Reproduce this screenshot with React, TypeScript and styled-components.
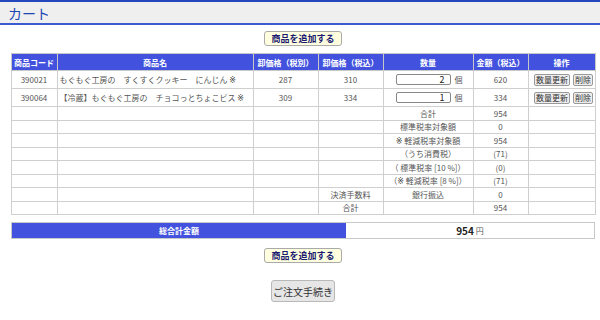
import React from "react";
import styled, { createGlobalStyle } from "styled-components";

const GlobalStyle = createGlobalStyle`
    body {
        margin: 0;
        background: #fff;
        font-family: "Noto Sans CJK JP", "Noto Sans", sans-serif;
        color: #555;
    }
`

interface CartItem {
    code: string;
    name: string;
    price: number;
    priceTax: number;
    qty: number;
    amount: number;
}

const items: CartItem[] = [
    { code: "390021", name: "もぐもぐ工房の　すくすくクッキー　にんじん", price: 287, priceTax: 310, qty: 2, amount: 620 },
    { code: "390064", name: "【冷蔵】もぐもぐ工房の　チョコっとちょこビス", price: 309, priceTax: 334, qty: 1, amount: 334 },
]

// ※ drawn in DejaVu so it never falls to a colour glyph
const Mark = styled.span`
    font-family: "DejaVu Sans", sans-serif;
    color: #444;
    font-size: 8px;
`

const summary: { left: string; label: React.ReactNode; value: string }[] = [
    { left: "", label: "合計", value: "954" },
    { left: "", label: "標準税率対象額", value: "0" },
    { left: "", label: <><Mark>※</Mark> 軽減税率対象額</>, value: "954" },
    { left: "", label: "（うち消費税）", value: "(71)" },
    { left: "", label: "（ 標準税率 [10 %]）", value: "(0)" },
    { left: "", label: <>（<Mark>※</Mark> 軽減税率 [8 %]）</>, value: "(71)" },
    { left: "決済手数料", label: "銀行振込", value: "0" },
    { left: "合計", label: "", value: "954" },
]

const App = () => {
    return (
        <>
            <GlobalStyle />
            <Header>
                <Title>カート</Title>
            </Header>
            <Main>
                <AddButton>商品を追加する</AddButton>
                <CartTable>
                    <colgroup>
                        <col style={{ width: 46 }} />
                        <col style={{ width: 196 }} />
                        <col style={{ width: 65 }} />
                        <col style={{ width: 65 }} />
                        <col style={{ width: 90 }} />
                        <col style={{ width: 55 }} />
                        <col style={{ width: 67 }} />
                    </colgroup>
                    <thead>
                        <tr>
                            <Th>商品コード</Th>
                            <Th>商品名</Th>
                            <Th>卸価格（税別）</Th>
                            <Th>卸価格（税込）</Th>
                            <Th>数量</Th>
                            <Th>金額（税込）</Th>
                            <Th>操作</Th>
                        </tr>
                    </thead>
                    <tbody>
                        {items.map((item) => (
                            <ItemRow key={item.code}>
                                <Td>{item.code}</Td>
                                <Td $left>{item.name} <Mark>※</Mark></Td>
                                <Td>{item.price}</Td>
                                <Td>{item.priceTax}</Td>
                                <Td>
                                    <QtyBox>
                                        <QtyInput defaultValue={item.qty} />
                                        <Unit>個</Unit>
                                    </QtyBox>
                                </Td>
                                <Td>{item.amount}</Td>
                                <Td>
                                    <Ops>
                                        <SmallButton>数量更新</SmallButton>
                                        <SmallButton>削除</SmallButton>
                                    </Ops>
                                </Td>
                            </ItemRow>
                        ))}
                        {summary.map((row, i) => (
                            <SumRow key={i}>
                                <Td />
                                <Td />
                                <Td />
                                <Td>{row.left}</Td>
                                <Td>{row.label}</Td>
                                <Td>{row.value}</Td>
                                <Td />
                            </SumRow>
                        ))}
                    </tbody>
                </CartTable>
                <TotalBar>
                    <TotalLabel>総合計金額</TotalLabel>
                    <TotalValue>
                        <b>954</b>
                        <Yen>円</Yen>
                    </TotalValue>
                </TotalBar>
                <AddButton>商品を追加する</AddButton>
                <CheckoutButton>ご注文手続き</CheckoutButton>
            </Main>
        </>
    )
}

const Header = styled.div`
    height: 21px;
    background: #efefef;
    border-top: 2px solid #2447c0;
    border-bottom: 2px solid #3b5bd0;
    display: flex;
    align-items: center;
    padding-left: 8px;
`

const Title = styled.h1`
    margin: 0;
    font-size: 14px;
    font-weight: normal;
    color: #1c46b4;
    line-height: 1;
`

const Main = styled.div`
    width: 584px;
    margin-left: 11px;
    display: flex;
    flex-direction: column;
    align-items: center;
    padding-top: 6px;
`

const AddButton = styled.button`
    font-family: inherit;
    font-size: 9px;
    font-weight: bold;
    color: #1a1a70;
    background: #ffffe0;
    border: 1px solid #aaa;
    border-radius: 3px;
    height: 15px;
    width: 78px;
    padding: 0;
    line-height: 13px;
    margin-bottom: 7px;
`

const CartTable = styled.table`
    width: 584px;
    border-collapse: collapse;
    table-layout: fixed;
    font-size: 8px;
    border: 1px solid #c8c8c8;
`

const Th = styled.th`
    background: #4252de;
    color: #fff;
    font-weight: bold;
    height: 16px;
    padding: 0;
    border: 1px solid #c8c8c8;
    white-space: nowrap;
`

const Td = styled.td<{ $left?: boolean }>`
    border: 1px solid #cfcfcf;
    padding: 0 ${(p) => (p.$left ? "2px" : "0")};
    text-align: ${(p) => (p.$left ? "left" : "center")};
    white-space: nowrap;
    overflow: hidden;
    color: #555;
`

const ItemRow = styled.tr`
    height: 18px;
`

const SumRow = styled.tr`
    height: 13.5px;
`

const QtyBox = styled.div`
    display: flex;
    align-items: center;
    justify-content: center;
    gap: 4px;
    padding-left: 2px;
`

const QtyInput = styled.input`
    width: 55px;
    height: 11px;
    box-sizing: border-box;
    border: 1px solid #888;
    border-radius: 2px;
    font-family: inherit;
    font-size: 9px;
    text-align: right;
    padding: 0 5px;
    color: #222;
`

const Unit = styled.span`
    font-size: 8px;
`

const Ops = styled.div`
    display: flex;
    justify-content: center;
    gap: 3px;
    padding-left: 4px;
`

const SmallButton = styled.button`
    font-family: inherit;
    font-size: 8px;
    color: #333;
    background: #eee;
    border: 1px solid #999;
    border-radius: 2px;
    height: 12px;
    padding: 0 1px;
    line-height: 10px;
`

const TotalBar = styled.div`
    width: 584px;
    height: 17px;
    margin-top: 7px;
    margin-bottom: 9px;
    display: flex;
    border: 1px solid #c8c8c8;
    box-sizing: border-box;
`

const TotalLabel = styled.div`
    width: 334px;
    background: #4252de;
    color: #fff;
    font-size: 8px;
    font-weight: bold;
    display: flex;
    align-items: center;
    justify-content: center;
`

const TotalValue = styled.div`
    flex: 1;
    display: flex;
    align-items: center;
    justify-content: center;
    gap: 2px;
    font-size: 10px;
    color: #222;
`

const Yen = styled.span`
    font-size: 8px;
    color: #555;
`

const CheckoutButton = styled.button`
    margin-top: 10px;
    font-family: inherit;
    font-size: 10px;
    color: #333;
    background: #e6e6e6;
    border: 1px solid #b8b8b8;
    border-radius: 3px;
    width: 64px;
    height: 22px;
    padding: 0;
`

export default App;
